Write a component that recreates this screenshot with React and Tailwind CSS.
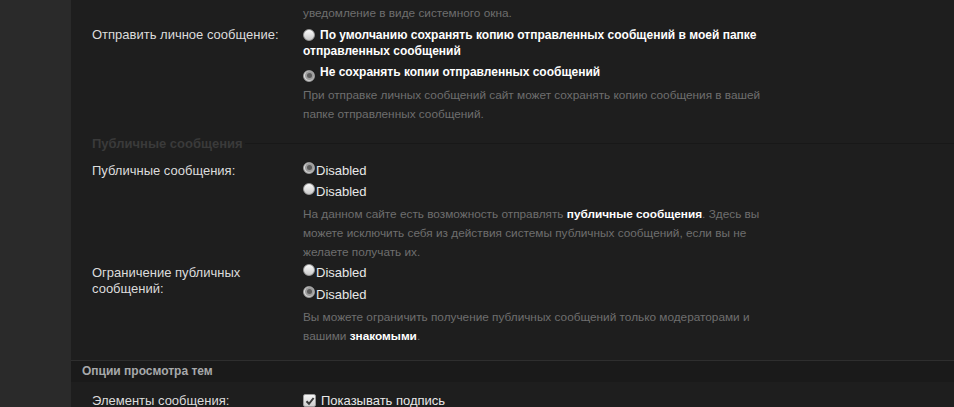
import React from "react";

const Radio = ({ checked, className = "" }) => (
    <span
        className={`inline-flex items-center justify-center w-[12px] h-[12px] rounded-full border border-[#9a9a9a] bg-[linear-gradient(#fafafa,#c9c9c9)] shrink-0 ${className}`}
    >
        {checked && <span className="w-[5px] h-[5px] rounded-full bg-[#5a5a5a] ring-2 ring-[#9c9c9c]" />}
    </span>
);

const Checkbox = () => (
    <span className="inline-flex items-center justify-center w-[13px] h-[13px] rounded-[2px] border border-[#9a9a9a] bg-[linear-gradient(#f4f4f4,#cfcfcf)] shrink-0">
        <svg width="10" height="10" viewBox="0 0 10 10">
            <path d="M1.5 5.2 L4 7.8 L8.6 2" fill="none" stroke="#3a3a3a" strokeWidth="2" />
        </svg>
    </span>
);

const Desc = ({ children, className = "" }) => (
    <div className={`text-[11.8px] leading-[19px] text-[#6e6e6e] w-[470px] ${className}`}>{children}</div>
);

const Row = ({ label, children, className = "" }) => (
    <div className={`grid grid-cols-[211px_1fr] ${className}`}>
        <div className="text-[13px] leading-[16px] text-[#dcdcdc] pr-6">{label}</div>
        <div>{children}</div>
    </div>
);

const Disabled = ({ checked, className = "" }) => (
    <div className={`flex items-start text-[13px] leading-[16px] text-[#e8e8e8] ${className}`}>
        <Radio checked={checked} className="-mt-[1px] mr-[1px]" />
        <span>Disabled</span>
    </div>
);

export default function App() {
    return (
        <div className="flex w-[954px] h-[407px] overflow-hidden bg-[#1e1e1e] font-['Liberation_Sans',Arial,sans-serif]">
            <aside className="w-[71px] shrink-0 bg-[#2a2a2a]" />
            <main className="flex-1 -mt-[15px]">
                <div className="pl-[21px]">
                    <Row label="">
                        <Desc>
                            Если включено, при получении нового личного сообщения вы получите
                            <br />
                            уведомление в виде системного окна.
                        </Desc>
                    </Row>

                    <Row label="Отправить личное сообщение:" className="mt-[4px]">
                        <div className="text-[12px] leading-[16px] font-bold text-white w-[462px]">
                            <div>
                                <Radio className="align-[-2px] mr-[5px]" />
                                По умолчанию сохранять копию отправленных сообщений в моей папке
                                отправленных сообщений
                            </div>
                            <div className="mt-[5px]">
                                <Radio checked className="align-[-2px] mr-[5px]" />
                                Не сохранять копии отправленных сообщений
                            </div>
                        </div>
                        <Desc className="mt-[4px]">
                            При отправке личных сообщений сайт может сохранять копию сообщения в вашей
                            папке отправленных сообщений.
                        </Desc>
                    </Row>

                    <div className="flex items-center mt-[13px]">
                        <span className="text-[13px] leading-[14px] font-bold text-[#3a3a3a] pr-[2px]">
                            Публичные сообщения
                        </span>
                        <span className="flex-1 h-px bg-[#181818]" />
                    </div>

                    <Row label="Публичные сообщения:" className="mt-[12px]">
                        <Disabled checked />
                        <Disabled className="mt-[5px]" />
                        <Desc className="mt-[5px]">
                            На данном сайте есть возможность отправлять{" "}
                            <span className="font-bold text-white">публичные сообщения</span>. Здесь вы
                            можете исключить себя из действия системы публичных сообщений, если вы не
                            желаете получать их.
                        </Desc>
                    </Row>

                    <Row label="Ограничение публичных сообщений:" className="mt-[3px]">
                        <Disabled />
                        <Disabled checked className="mt-[6px]" />
                        <Desc className="mt-[5px]">
                            Вы можете ограничить получение публичных сообщений только модераторами и
                            вашими <span className="font-bold text-white">знакомыми</span>.
                        </Desc>
                    </Row>
                </div>

                <div className="mt-[14px] border-t border-[#2e2e2e] bg-[#1a1a1a] h-[22px] pl-[11px] flex items-center">
                    <span className="text-[12px] font-bold text-[#a7a9ab]">Опции просмотра тем</span>
                </div>

                <div className="pl-[21px] mt-[11px]">
                    <Row label="Элементы сообщения:">
                        <div className="flex items-center gap-[5px] text-[13px] leading-[16px] text-[#e8e8e8]">
                            <Checkbox />
                            <span>Показывать подпись</span>
                        </div>
                    </Row>
                </div>
            </main>
        </div>
    );
}
